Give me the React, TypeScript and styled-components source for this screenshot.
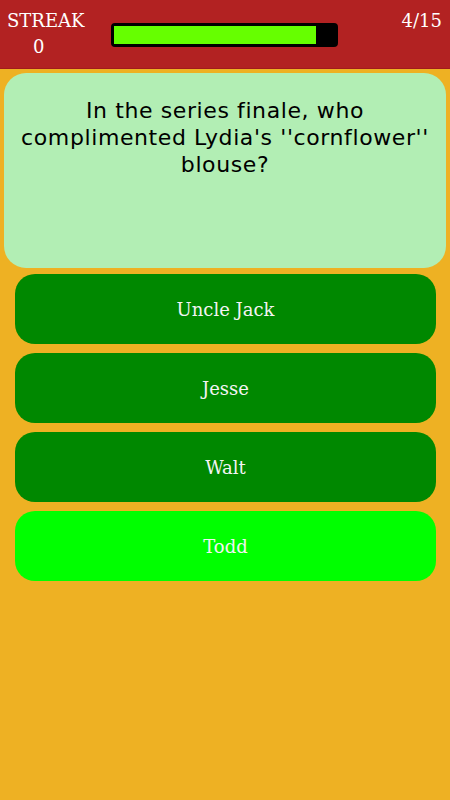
import React from "react";
import styled, { createGlobalStyle } from "styled-components";

const GlobalStyle = createGlobalStyle`
  html, body {
    margin: 0;
    padding: 0;
    background: #eeb123;
  }
  #root {
    min-height: 800px;
  }
`;

const Screen = styled.div`
  width: 450px;
  height: 800px;
  background: #eeb123;
  display: flex;
  flex-direction: column;
`;

const TopBar = styled.div`
  height: 69px;
  background: #b22222;
  border-bottom: 1px solid #a01c1c;
  display: flex;
  align-items: flex-start;
  justify-content: space-between;
  padding: 8px 8px 0 7px;
  box-sizing: border-box;
  font-family: "DejaVu Serif", "Liberation Serif", serif;
  color: #fff;
`;

const Streak = styled.div`
  display: flex;
  flex-direction: column;
  align-items: center;
  font-size: 18px;
  line-height: 26px;
`;

const StreakValue = styled.span`
  margin-right: 14px;
`;

const Counter = styled.div`
  font-size: 18px;
  line-height: 26px;
`;

const Bar = styled.div`
  margin-top: 15px;
  width: 227px;
  height: 24px;
  box-sizing: border-box;
  background: #000;
  border: 3px solid #000;
  border-radius: 4px;
  margin-left: 27px;
  margin-right: auto;
`;

const Fill = styled.div`
  height: 100%;
  background: #66ff00;
`;

const QuestionCard = styled.div`
  margin: 4px 4px 0 4px;
  height: 195px;
  background: #b2eeb4;
  border-radius: 22px;
  box-sizing: border-box;
  padding: 24px 8px 0;
  text-align: center;
  font-family: "DejaVu Sans", "Liberation Sans", sans-serif;
  font-size: 22px;
  letter-spacing: 0.6px;
  line-height: 27px;
  color: #000;
`;

const Answers = styled.div`
  display: flex;
  flex-direction: column;
  gap: 9px;
  padding: 6px 14px 0 15px;
`;

const Answer = styled.button<{ $active?: boolean }>`
  height: 70px;
  border: none;
  border-radius: 20px;
  background: ${(p) => (p.$active ? "#00ff00" : "#008800")};
  color: #f4f4f4;
  font-family: "DejaVu Serif", "Liberation Serif", serif;
  font-size: 18px;
  cursor: pointer;
`;

const answers = ["Uncle Jack", "Jesse", "Walt", "Todd"];

export default function App() {
  const progress = 0.91;
  return (
    <>
      <GlobalStyle />
      <Screen>
        <TopBar>
          <Streak>
            <span>STREAK</span>
            <StreakValue>0</StreakValue>
          </Streak>
          <Bar>
            <Fill style={{ width: `${progress * 100}%` }} />
          </Bar>
          <Counter>4/15</Counter>
        </TopBar>
        <QuestionCard>
          In the series finale, who complimented Lydia's ''cornflower'' blouse?
        </QuestionCard>
        <Answers>
          {answers.map((a, i) => (
            <Answer key={a} $active={i === 3}>
              {a}
            </Answer>
          ))}
        </Answers>
      </Screen>
    </>
  );
}
